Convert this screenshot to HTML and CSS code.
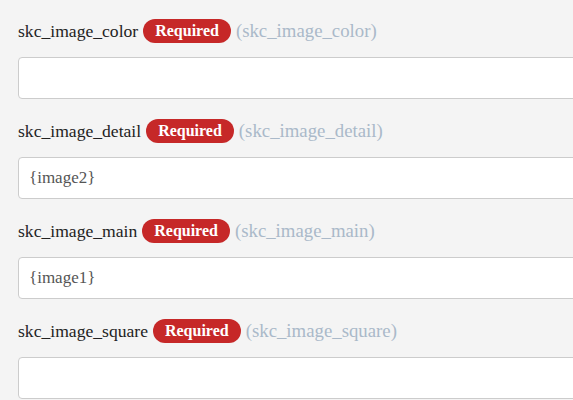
FILE: index.html
```html
<!DOCTYPE html>
<html lang="en">
<head>
  <meta charset="UTF-8">
  <meta name="viewport" content="width=device-width, initial-scale=1.0">
  <title>Image fields</title>
  <link rel="stylesheet" href="styles.css">
</head>
<body>
  <div class="container">
    <div class="field">
      <div class="field-label">
        <label for="imgColor">skc_image_color</label>
        <span class="badge">Required</span>
        <span class="key">(skc_image_color)</span>
      </div>
      <input type="text" id="imgColor" value="">
    </div>
    <div class="field">
      <div class="field-label">
        <label for="imgDetail">skc_image_detail</label>
        <span class="badge">Required</span>
        <span class="key">(skc_image_detail)</span>
      </div>
      <input type="text" id="imgDetail" value="{image2}">
    </div>
    <div class="field">
      <div class="field-label">
        <label for="imgMain">skc_image_main</label>
        <span class="badge">Required</span>
        <span class="key">(skc_image_main)</span>
      </div>
      <input type="text" id="imgMain" value="{image1}">
    </div>
    <div class="field">
      <div class="field-label">
        <label for="imgSquare">skc_image_square</label>
        <span class="badge">Required</span>
        <span class="key">(skc_image_square)</span>
      </div>
      <input type="text" id="imgSquare" value="">
    </div>
  </div>
</body>
</html>
```

FILE: styles.css
```css
html, body {
  overflow: hidden;
}
body {
  margin: 0;
  background: #f4f4f4;
  font-family: "Liberation Serif", "Times New Roman", serif;
  font-size: 17.6px;
  color: #222;
}
.container {
  width: 640px;
  padding: 19px 0 0 18px;
}
.field {
  margin-bottom: 20px;
}
.field-label {
  display: flex;
  align-items: center;
  gap: 5px;
  height: 24px;
  margin-bottom: 14px;
}
.badge {
  background: #c62828;
  color: #fff;
  font-size: 16px;
  font-weight: bold;
  line-height: 18px;
  padding: 3px 12px;
  border-radius: 12px;
}
.key {
  color: #aab9c9;
  font-size: 18.8px;
}
input {
  display: block;
  box-sizing: border-box;
  width: 100%;
  height: 42px;
  padding: 0 10px;
  border: 1px solid #ccc;
  border-radius: 4px;
  background: #fff;
  font-family: inherit;
  font-size: 17px;
  color: #555;
}
```
